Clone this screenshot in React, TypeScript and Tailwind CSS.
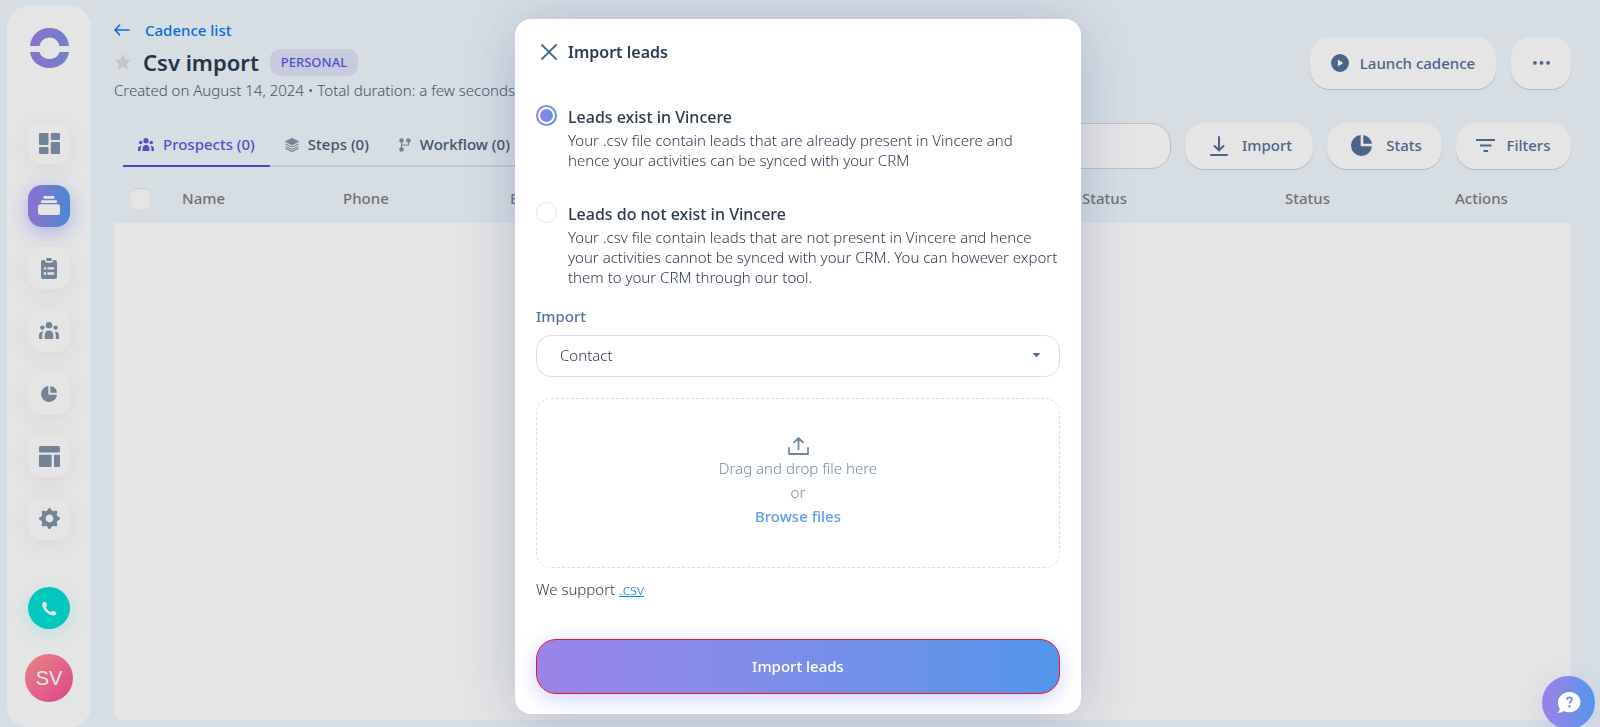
import { useState } from 'react';
import clsx from 'clsx';

type IconProps = { className?: string };

const DashboardIcon = ({ className }: IconProps) => (
  <svg viewBox="0 0 21 21" fill="currentColor" className={className}>
    <rect x="0" y="0" width="9.5" height="12" rx="1" />
    <rect x="11.8" y="0" width="9.2" height="7" rx="1" />
    <rect x="0" y="14" width="9.5" height="7" rx="1" />
    <rect x="11.8" y="9" width="9.2" height="12" rx="1" />
  </svg>
);

const CadenceIcon = ({ className }: IconProps) => (
  <svg viewBox="0 0 22 19" fill="currentColor" className={className}>
    <rect x="5.4" y="0" width="11" height="2.8" rx="1" />
    <rect x="3" y="4.2" width="16" height="2.8" rx="1" />
    <rect x="0" y="8.2" width="22" height="10.8" rx="2.5" />
  </svg>
);

const TasksIcon = ({ className }: IconProps) => (
  <svg viewBox="0 0 16 21" fill="currentColor" className={className}>
    <rect x="5" y="0" width="6" height="3" rx="1.5" />
    <path
      fillRule="evenodd"
      d="M2 2h1.6c.3 1.8 1.4 2.8 3 2.8h2.8c1.6 0 2.7-1 3-2.8H14a2 2 0 0 1 2 2V19a2 2 0 0 1-2 2H2a2 2 0 0 1-2-2V4a2 2 0 0 1 2-2zM2.8 9.2v2.4h2.4V9.2zm3.7 0v2.4h6.6V9.2zM2.8 14.3v2.4h2.4v-2.4zm3.7 0v2.4h6.6v-2.4z"
    />
  </svg>
);

const PeopleIcon = ({ className }: IconProps) => (
  <svg viewBox="0 0 20 17" fill="currentColor" className={className}>
    <circle cx="10" cy="3.3" r="3.3" />
    <circle cx="3.4" cy="5.6" r="2.2" />
    <circle cx="16.6" cy="5.6" r="2.2" />
    <path d="M5.7 17v-3.6c0-2.8 1.6-4.8 4.3-4.8s4.3 2 4.3 4.8V17z" />
    <path d="M0 17v-3.6c0-2.2 1.5-3.8 4.2-3.8-.7 1.1-1 2.4-1 3.8V17z" />
    <path d="M20 17v-3.6c0-2.2-1.5-3.8-4.2-3.8.7 1.1 1 2.4 1 3.8V17z" />
  </svg>
);

const PieIcon = ({ className }: IconProps) => (
  <svg viewBox="0 0 20 20" fill="currentColor" className={className}>
    <path d="M9.2 0v10.8H20A10 10 0 1 1 9.2 0z" />
    <path d="M11.7 0A9.8 9.8 0 0 1 20 8.3h-8.3z" />
  </svg>
);

const TemplateIcon = ({ className }: IconProps) => (
  <svg viewBox="0 0 21 21" fill="currentColor" className={className}>
    <rect x="0" y="0" width="21" height="6.5" rx="1.5" />
    <rect x="0" y="8.8" width="12.6" height="12.2" rx="1" />
    <rect x="15" y="8.8" width="6" height="12.2" rx="1" />
  </svg>
);

const gearTeeth = [0, 45, 90, 135, 180, 225, 270, 315];

const SettingsIcon = ({ className }: IconProps) => (
  <svg viewBox="-10.5 -10.5 21 21" fill="currentColor" className={className}>
    <circle r="6" fill="none" stroke="currentColor" strokeWidth="4.2" />
    {gearTeeth.map((angle) => (
      <path key={angle} transform={`rotate(${angle})`} d="M-3.6-7C-2.4-7.6-1.7-8.6-1.2-10Q0-11 1.2-10C1.7-8.6 2.4-7.6 3.6-7z" />
    ))}
  </svg>
);

const PhoneIcon = ({ className }: IconProps) => (
  <svg viewBox="0 0 16 16" fill="currentColor" className={className}>
    <path d="M1 1.6C2 .6 3.6.6 4.2 1.7l1 1.9c.4.8.2 1.5-.5 2.2l-.7.7c.8 2.3 3 4.5 5.6 5.4l.8-.8c.6-.6 1.3-.8 2.1-.4l2.2 1.1c1 .6 1 1.8.1 2.7-1 .9-2.3 1.2-3.9.8C5.9 14.2 1.5 9.5.5 5 .1 3.5.2 2.4 1 1.6z" />
  </svg>
);

const LayersIcon = ({ className }: IconProps) => (
  <svg viewBox="0 0 14 14" fill="none" stroke="currentColor" strokeWidth="1.1" className={className}>
    <path d="M7 .6 13.2 3.6 7 6.6.8 3.6z" fill="currentColor" />
    <path d="M.5 6 7 9l6.5-3M.5 8.4l6.5 3 6.5-3M.5 10.6l6.5 3 6.5-3" />
  </svg>
);

const WorkflowIcon = ({ className }: IconProps) => (
  <svg viewBox="0 0 12 14" fill="currentColor" className={className}>
    <circle cx="2.5" cy="2.5" r="2.3" />
    <circle cx="9.5" cy="2.5" r="2.3" />
    <circle cx="2.5" cy="11.5" r="2.3" />
    <path d="M2.5 3v8M9.5 3v4h-7" fill="none" stroke="currentColor" strokeWidth="1.1" />
  </svg>
);

const LogoIcon = ({ className }: IconProps) => (
  <svg viewBox="0 0 39 40" className={className}>
    <defs>
      <linearGradient id="logo" x1="0" y1="0" x2="1" y2="0">
        <stop offset="0" stopColor="#9b7fe0" />
        <stop offset="1" stopColor="#7f90e4" />
      </linearGradient>
    </defs>
    <path fill="url(#logo)" d="M0 18C1 7 9 0 19.5 0S38 7 39 18H29.5C28.5 13 24.5 9.5 19.5 9.5S10.5 13 9.5 18z" />
    <path fill="url(#logo)" d="M0 24C1 33 9 40 19.5 40S38 33 39 24H29.5C28.5 28 24.5 31 19.5 31S10.5 28 9.5 24z" />
  </svg>
);

const menu = [
  { label: 'Dashboard', Icon: DashboardIcon, size: 'w-[21px]' },
  { label: 'Cadences', Icon: CadenceIcon, size: 'w-[22px]', active: true },
  { label: 'Tasks', Icon: TasksIcon, size: 'w-[16px]' },
  { label: 'Prospects', Icon: PeopleIcon, size: 'w-[20px]' },
  { label: 'Statistics', Icon: PieIcon, size: 'w-[16px]' },
  { label: 'Templates', Icon: TemplateIcon, size: 'w-[21px]' },
  { label: 'Settings', Icon: SettingsIcon, size: 'w-[21px]' },
];

const Sidebar = () => (
  <aside className="flex w-[84px] shrink-0 flex-col items-center rounded-[21px] bg-white pt-[22px] pb-[25px]">
    <LogoIcon className="w-[39px]" />
    <nav className="mt-[54px] flex h-[418px] flex-col justify-between">
      {menu.map(({ label, Icon, size, active }) => (
        <a
          key={label}
          href="#"
          aria-label={label}
          className={clsx(
            'flex size-[42px] items-center justify-center rounded-[14px]',
            active
              ? 'bg-linear-to-r from-[#9a80e6] to-[#5096ea] text-white shadow-[0_5px_20px_rgba(91,109,255,0.4)]'
              : 'bg-white text-[#7f93a8] shadow-[0_5px_25px_rgba(0,0,0,0.06)]'
          )}
        >
          <Icon className={size} />
        </a>
      ))}
    </nav>
    <button
      aria-label="Call"
      className="mt-[47px] flex size-[42px] shrink-0 items-center justify-center rounded-full bg-[#00dfd4] text-white shadow-[0_5px_20px_rgba(0,223,212,0.2)]"
    >
      <PhoneIcon className="w-[15px]" />
    </button>
    <button
      aria-label="Account"
      className="mt-[25px] size-[48px] shrink-0 rounded-full bg-linear-to-br from-[#ff9494] to-[#f5499b] font-['Liberation_Sans',sans-serif] text-[20px] text-white"
    >
      SV
    </button>
  </aside>
);

const tabs = [
  { label: 'Prospects (0)', Icon: PeopleIcon, size: 'w-[16px]', active: true },
  { label: 'Steps (0)', Icon: LayersIcon, size: 'w-[14px] text-[#7f93a8]' },
  { label: 'Workflow (0)', Icon: WorkflowIcon, size: 'w-[12px] text-[#7f93a8]' },
];

const pill = 'flex items-center justify-center bg-white font-medium text-[#55709a] shadow-[0_1px_1px_rgba(0,0,0,0.16)]';

const Header = () => (
  <header className="flex items-start justify-between">
    <div>
      <a href="#" className="flex h-[22px] items-center gap-[15px] font-medium text-[#0a78ff]">
        <svg viewBox="0 0 16 12" className="w-[16px]" fill="none" stroke="currentColor" strokeWidth="1.6" strokeLinecap="round" strokeLinejoin="round">
          <path d="M15 6H1M5.5 1.2 1 6l4.5 4.8" />
        </svg>
        Cadence list
      </a>
      <div className="mt-[6px] flex h-[30px] items-center">
        <svg viewBox="0 0 24 24" className="w-[18px]" fill="#dcdde0">
          <path d="M12 1l3.3 7.3 7.9.8-6 5.3 1.8 7.9-7-4.2-7 4.2 1.8-7.9-6-5.3 7.9-.8z" />
        </svg>
        <h1 className="ml-[11px] text-[22px] font-semibold text-[#2a3b50]">Csv import</h1>
        <span className="ml-[11px] rounded-[10px] bg-[#dfe3f6] px-[11px] text-[13px]/[27px] font-medium text-[#5a5ae6]">PERSONAL</span>
      </div>
      <p className="mt-[2px] font-light text-[#4d5c73]">Created on August 14, 2024 • Total duration: a few seconds</p>
    </div>
    <div className="mt-[18px] flex gap-[15px]">
      <button className={clsx(pill, 'h-[52px] w-[186px] gap-[11px] rounded-[20px]')}>
        <svg viewBox="0 0 18 18" className="w-[18px]" fill="currentColor">
          <path fillRule="evenodd" d="M9 0a9 9 0 1 1 0 18A9 9 0 0 1 9 0zM6.9 5.4v7.2L12.3 9z" />
        </svg>
        Launch cadence
      </button>
      <button aria-label="More" className={clsx(pill, 'h-[52px] w-[60px] rounded-[20px]')}>
        <svg viewBox="0 0 18 4" className="w-[17px]" fill="currentColor">
          <circle cx="2" cy="2" r="2" />
          <circle cx="9" cy="2" r="2" />
          <circle cx="16" cy="2" r="2" />
        </svg>
      </button>
    </div>
  </header>
);

const Toolbar = () => (
  <div className="mt-[21px] flex items-center gap-[14px]">
    <nav className="ml-[9px] flex h-[43px] shrink-0 border-b-2 border-[#dcdff5]">
      {tabs.map(({ label, Icon, size, active }) => (
        <a
          key={label}
          href="#"
          className={clsx(
            '-mb-[2px] flex items-center gap-[9px] border-b-2 px-[15px] font-medium',
            active ? 'border-[#4a55e0] text-[#5a5ae0]' : 'border-transparent text-[#4a5c78]'
          )}
        >
          <Icon className={size} />
          {label}
        </a>
      ))}
    </nav>
    <input
      type="search"
      aria-label="Search"
      className="h-[46px] min-w-0 grow rounded-[20px] border border-[#d2d5d8] bg-white px-5"
    />
    <button className={clsx(pill, 'h-[46px] w-[128px] gap-[14px] rounded-[20px] pl-[4px]')}>
      <svg viewBox="0 0 18 20" className="w-[18px]" fill="none" stroke="currentColor" strokeWidth="2" strokeLinecap="round">
        <path d="M9 1v13M4.5 10 9 14.3 13.5 10M1 19h16" />
      </svg>
      Import
    </button>
    <button className={clsx(pill, 'h-[46px] w-[115px] gap-[14px] rounded-[20px] pl-[4px]')}>
      <PieIcon className="w-[21px]" />
      Stats
    </button>
    <button className={clsx(pill, 'h-[46px] w-[115px] gap-[11px] rounded-[20px]')}>
      <svg viewBox="0 0 19 13" className="w-[19px]" fill="none" stroke="currentColor" strokeWidth="2">
        <path d="M0 1h19M4 6.5h11.5M7.5 12h4.5" />
      </svg>
      Filters
    </button>
  </div>
);

const ProspectTable = () => (
  <section className="mt-[6px] flex grow flex-col">
    <table className="w-full table-fixed text-left text-[#7f7f7f]">
      <thead>
        <tr className="h-[48px] *:font-medium">
          <th className="w-[68px] pl-[16px]">
            <input
              type="checkbox"
              aria-label="Select all"
              className="block size-[21px] appearance-none rounded-[7px] bg-white shadow-[inset_0_1px_2px_rgba(0,0,0,0.12)]"
            />
          </th>
          <th className="w-[161px]">Name</th>
          <th className="w-[167px]">Phone</th>
          <th>Email</th>
          <th className="w-[203px]">Status</th>
          <th className="w-[170px]">Status</th>
          <th className="w-[116px]">Actions</th>
        </tr>
      </thead>
    </table>
    <div className="grow rounded-b-[8px] bg-white" />
  </section>
);

const options = [
  {
    value: 'exist',
    title: 'Leads exist in Vincere',
    text: 'Your .csv file contain leads that are already present in Vincere and\nhence your activities can be synced with your CRM',
  },
  {
    value: 'new',
    title: 'Leads do not exist in Vincere',
    text: 'Your .csv file contain leads that are not present in Vincere and hence\nyour activities cannot be synced with your CRM. You can however export\nthem to your CRM through our tool.',
  },
];

const ImportModal = () => {
  const [selected, setSelected] = useState('exist');

  return (
    <div className="fixed inset-0 flex items-center justify-center bg-black/10 pt-[5px] pr-[4px]">
      <div
        role="dialog"
        aria-labelledby="modal-title"
        className="w-[566px] rounded-[16px] bg-white px-[21px] pt-[19px] pb-[20px] shadow-[0_5px_60px_rgba(50,70,136,0.26)]"
      >
        <div className="flex h-[28px] items-center gap-[11px] pl-[5px]">
          <button aria-label="Close" className="text-[#4a6a92]">
            <svg viewBox="0 0 16 16" className="w-[16px]" fill="none" stroke="currentColor" strokeWidth="1.8" strokeLinecap="round">
              <path d="M1 1l14 14M15 1 1 15" />
            </svg>
          </button>
          <h2 id="modal-title" className="text-[16px] font-semibold text-[#2a3b50]">
            Import leads
          </h2>
        </div>

        <div className="mt-[38px] flex flex-col gap-[31px]">
          {options.map(({ value, title, text }) => (
            <div key={value} className="flex items-start gap-[11px]">
              <input
                type="radio"
                name="leads"
                id={value}
                checked={selected === value}
                onChange={() => setSelected(value)}
                className="mt-[1px] grid size-[21px] shrink-0 appearance-none place-items-center rounded-full border border-[#e3e5e8] before:size-[17px] before:rounded-full before:border-2 before:border-white checked:border-0 checked:bg-linear-to-r checked:from-[#9a80e6] checked:to-[#5096ea]"
              />
              <label htmlFor={value} className="text-[#2e3c50]">
                <span className="block text-[16px]/[26px] font-medium text-[#2a3b50]">{title}</span>
                <span className="block leading-[20px] font-light whitespace-pre-line">{text}</span>
              </label>
            </div>
          ))}
        </div>

        <label htmlFor="import-type" className="mt-[18px] block leading-[22px] font-medium text-[#55709a]">
          Import
        </label>
        <div className="relative mt-[8px]">
          <select
            id="import-type"
            className="block h-[42px] w-full appearance-none rounded-[15px] border border-[#dcdee0] bg-white pl-[23px] font-light text-[#2e3c50]"
          >
            <option>Contact</option>
            <option>Candidate</option>
          </select>
          <svg viewBox="0 0 8 5" className="pointer-events-none absolute top-[18px] right-[20px] w-[7px]" fill="#55709a">
            <path d="M.6 0h6.8c.5 0 .7.5.4.9L4.6 4.6c-.3.4-.9.4-1.2 0L.2.9C-.1.5.1 0 .6 0z" />
          </svg>
        </div>

        <div className="mt-[21px] flex h-[170px] flex-col items-center justify-center rounded-[15px] border border-dashed border-[#dcdee0] leading-[24px] text-[#7488a6]">
          <svg viewBox="0 0 21 18" className="mb-[1px] w-[21px]" fill="none" stroke="currentColor" strokeWidth="1.8" strokeLinecap="round" strokeLinejoin="round">
            <path d="M10.5 12.5V1M6 5.3 10.5 1 15 5.3M1 11v6h19v-6" />
          </svg>
          <p className="font-light">Drag and drop file here</p>
          <p className="font-light">or</p>
          <button className="font-medium text-[#5a9fea]">Browse files</button>
        </div>

        <p className="mt-[10px] leading-[22px] font-light text-[#2e3c50]">
          We support{' '}
          <a href="#" className="text-[#1a80ff] underline">
            .csv
          </a>
        </p>

        <button className="mt-[39px] block h-[55px] w-full rounded-[20px] border border-[#f0142e] bg-linear-to-r from-[#9a84e8] to-[#5096ea] font-medium text-white shadow-[0_5px_20px_rgba(91,109,235,0.3)]">
          Import leads
        </button>
      </div>
    </div>
  );
};

const App = () => (
  <div className="flex min-h-screen bg-[#eff7fd] pt-[6px] pl-[7px] font-['Noto_Sans',sans-serif] text-[15px]">
    <Sidebar />
    <main className="flex min-w-0 grow flex-col pt-[13px] pr-[29px] pb-[7px] pl-[23px]">
      <Header />
      <Toolbar />
      <ProspectTable />
    </main>
    <ImportModal />
    <button
      aria-label="Help"
      className="fixed right-[5px] -bottom-[2px] flex size-[53px] items-center justify-center rounded-full bg-linear-to-r from-[#9a80e6] to-[#5096ea] text-white shadow-[0_5px_25px_rgba(91,109,235,0.15)]"
    >
      <svg viewBox="0 0 24 21" className="w-[24px]">
        <path fill="currentColor" d="M12.5 0C18.6 0 23.5 4.5 23.5 10S18.6 20.2 12.5 20.2c-2 0-3.8-.4-5.4-1.2C5.4 20.3 3 21 .5 21c1.3-1.1 2-2.4 2.2-4C1.7 14.8 1 12.6 1 10 1 4.5 6.4 0 12.5 0z" />
        <path d="M9.9 7.8c0-1.5 1.1-2.4 2.5-2.4s2.5.9 2.5 2.2c0 1.8-2.4 1.9-2.4 4" fill="none" stroke="#7b8de8" strokeWidth="1.9" />
        <circle cx="12.5" cy="14.4" r="1.2" fill="#7b8de8" />
      </svg>
    </button>
  </div>
);

export default App;
